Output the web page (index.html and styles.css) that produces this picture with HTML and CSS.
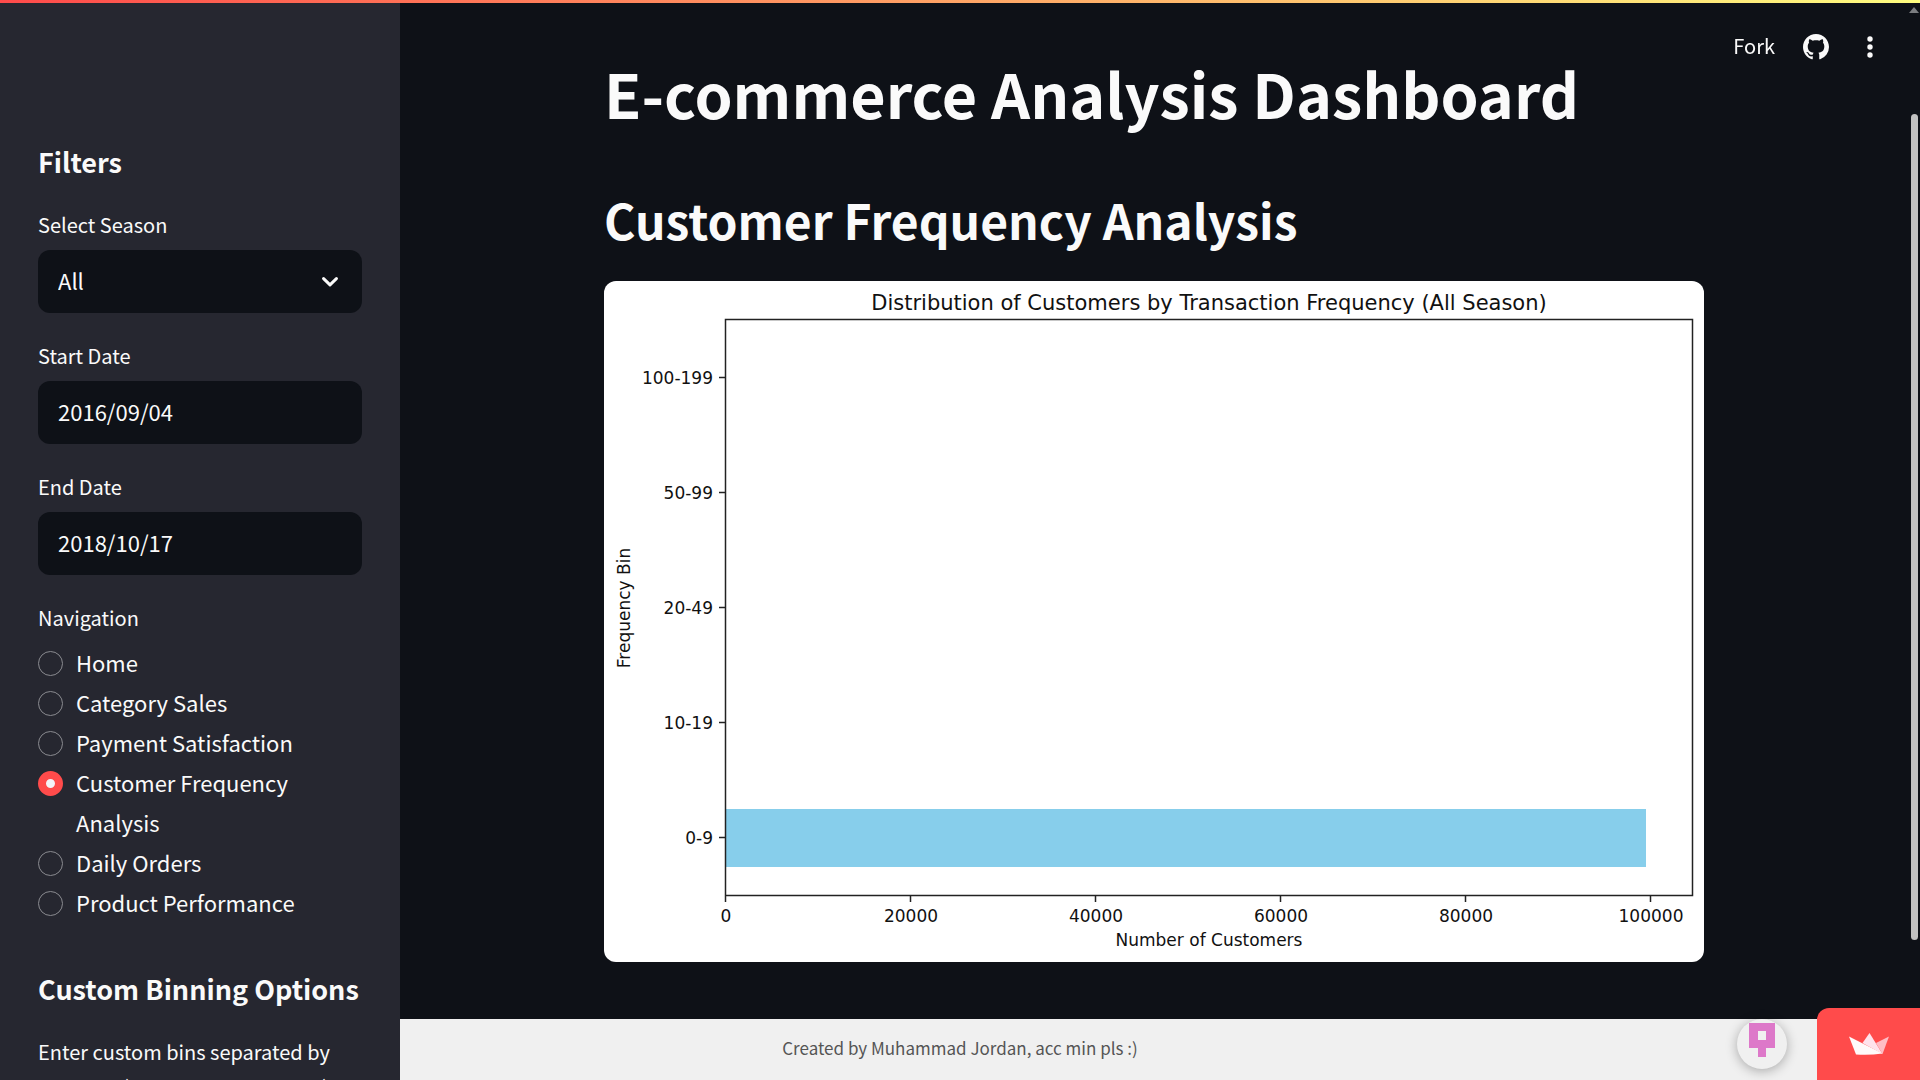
FILE: index.html
```html
<!DOCTYPE html>
<html lang="en">
<head>
<meta charset="utf-8">
<title>E-commerce Analysis Dashboard</title>
<link rel="stylesheet" href="styles.css">
</head>
<body>
<div class="app">
  <aside class="sidebar">
    <h2 class="side-title">Filters</h2>
    <div class="field">
      <label for="season">Select Season</label>
      <div class="select-wrap">
        <select id="season" class="control"><option>All</option></select>
        <svg class="chevron" viewBox="0 0 16 10" aria-hidden="true"><path d="M1.6 1.6 L8 7.8 L14.4 1.6" fill="none" stroke="currentColor" stroke-width="3" stroke-linecap="round" stroke-linejoin="round"/></svg>
      </div>
    </div>
    <div class="field">
      <label for="start">Start Date</label>
      <input id="start" class="control" type="text" value="2016/09/04">
    </div>
    <div class="field">
      <label for="end">End Date</label>
      <input id="end" class="control" type="text" value="2018/10/17">
    </div>
    <fieldset class="nav">
      <legend>Navigation</legend>
      <label class="option"><input type="radio" name="nav"><span>Home</span></label>
      <label class="option"><input type="radio" name="nav"><span>Category Sales</span></label>
      <label class="option"><input type="radio" name="nav"><span>Payment Satisfaction</span></label>
      <label class="option"><input type="radio" name="nav" checked><span>Customer Frequency Analysis</span></label>
      <label class="option"><input type="radio" name="nav"><span>Daily Orders</span></label>
      <label class="option"><input type="radio" name="nav"><span>Product Performance</span></label>
    </fieldset>
    <h2 class="side-title">Custom Binning Options</h2>
    <div class="field">
      <label for="bins">Enter custom bins separated by commas (e.g., 0,9,19,49,99,199)</label>
      <input id="bins" class="control" type="text">
    </div>
  </aside>

  <main class="main">
    <div class="content">
      <h1>E-commerce Analysis Dashboard</h1>
      <h2 class="section-title">Customer Frequency Analysis</h2>
      <svg class="chart" viewBox="0 0 1100 681" role="img" aria-label="Distribution of customers by transaction frequency">
        <rect x="122" y="528" width="920" height="58" fill="#87ceeb"/>
        <path d="M121.500 38.500H1088.500V614.500H121.500Z M115 96.500h6 M115 211.500h6 M115 326.500h6 M115 441.500h6 M115 556.500h6 M121.500 615v6 M306.500 615v6 M491.500 615v6 M676.500 615v6 M861.500 615v6 M1046.500 615v6" class="axes"/>
        <text class="chart-title" x="605" y="29">Distribution of Customers by Transaction Frequency (All Season)</text>
        <g class="y-ticks">
          <text x="109" y="103">100-199</text>
          <text x="109" y="218">50-99</text>
          <text x="109" y="333">20-49</text>
          <text x="109" y="448">10-19</text>
          <text x="109" y="563">0-9</text>
        </g>
        <g class="x-ticks">
          <text x="122" y="641">0</text>
          <text x="307" y="641">20000</text>
          <text x="492" y="641">40000</text>
          <text x="677" y="641">60000</text>
          <text x="862" y="641">80000</text>
          <text x="1047" y="641">100000</text>
          <text x="605" y="665">Number of Customers</text>
          <text x="26" y="327" transform="rotate(-90 26 327)">Frequency Bin</text>
        </g>
      </svg>
    </div>
  </main>
</div>

<footer class="footer">Created by Muhammad Jordan, acc min pls :)</footer>
<div class="decoration"></div>

<header class="toolbar">
  <button type="button" class="fork">Fork</button>
  <a href="#" class="icon" aria-label="View source"><svg width="26" height="26" viewBox="0 0 16 16" fill="currentColor"><path d="M8 0C3.580 0 0 3.580 0 8c0 3.540 2.290 6.530 5.470 7.590.4.070.55-.17.55-.38 0-.19-.01-.82-.01-1.490-2.010.37-2.530-.49-2.690-.94-.09-.23-.48-.94-.82-1.130-.28-.15-.68-.52-.01-.53.63-.01 1.080.58 1.230.82.72 1.210 1.870.87 2.330.66.07-.52.28-.87.51-1.070-1.780-.2-3.640-.89-3.640-3.950 0-.87.31-1.590.82-2.150-.08-.2-.36-1.020.08-2.120 0 0 .67-.21 2.200.82.64-.18 1.320-.27 2-.27s1.360.09 2 .27c1.530-1.040 2.200-.82 2.200-.82.44 1.100.16 1.920.08 2.120.51.56.82 1.270.82 2.150 0 3.070-1.870 3.750-3.650 3.950.29.25.54.73.54 1.480 0 1.070-.01 1.930-.01 2.200 0 .21.15.46.55.38A8.010 8.010 0 0 0 16 8c0-4.420-3.580-8-8-8z"/></svg></a>
  <button type="button" class="icon" aria-label="Menu"><svg width="26" height="26" viewBox="0 0 26 26" fill="currentColor"><circle cx="13" cy="5" r="2.700"/><circle cx="13" cy="13" r="2.700"/><circle cx="13" cy="21" r="2.700"/></svg></button>
</header>

<div class="scrollbar" aria-hidden="true"><div class="arrow"></div><div class="thumb"></div></div>

<a href="#" class="avatar" aria-label="Creator profile"><svg width="50" height="50" viewBox="0 0 50 50"><path fill="#dd78c9" fill-rule="evenodd" d="M12 4h26v25h-9v9h-8v-9h-9z M21 12h8v9h-8z"/></svg></a>
<a href="#" class="badge" aria-label="Hosted app"><svg width="40" height="22" viewBox="0 0 40 22"><path fill="#ffbdc5" d="M40 3.500 27 10 33.500 21z"/><path fill="#ffe3ec" d="M20.500 0 13.500 10 33.500 21z"/><path fill="#fffafa" d="M0 3.500 33.500 20.500Q20 22.500 7 21.500z"/></svg></a>
</body>
</html>
```
FILE: styles.css
```css
* { box-sizing: border-box; }

body {
  margin: 0;
  background: #0e1117;
  color: #fafafa;
  font-family: "Noto Sans CJK SC", "Source Sans Pro", sans-serif;
  font-size: 22px;
  line-height: 40px;
  overflow: hidden;
}

button, input, select { font: inherit; color: inherit; }

.app {
  display: grid;
  grid-template-columns: 400px 1fr;
  height: 100vh;
}

.sidebar {
  position: relative;
  z-index: 2;
  overflow: hidden;
  padding: 144px 38px 0;
  background: #262730;
}

.side-title {
  margin: 0 0 27px;
  font-size: 27px;
  line-height: 36px;
  font-weight: 700;
  white-space: nowrap;
}

.field { margin-bottom: 25px; }

.field label, .nav legend {
  display: block;
  margin-bottom: 8px;
  padding: 0;
  font-size: 20px;
  line-height: 35px;
}

.control {
  display: block;
  width: 100%;
  height: 63px;
  padding: 0 20px 3px;
  border: 0;
  border-radius: 12px;
  background: #0e1117;
  appearance: none;
}

.select-wrap { position: relative; }

.chevron {
  position: absolute;
  top: 27px;
  right: 24px;
  width: 16px;
  height: 10px;
}

.nav {
  margin: 0 0 49px;
  padding: 0;
  border: 0;
}

.nav legend { margin-bottom: 7px; }

.option {
  display: flex;
  align-items: flex-start;
  gap: 13px;
}

.option input {
  flex: none;
  width: 25px;
  height: 25px;
  margin: 9px 0 0;
  border: 1px solid #8a8b90;
  border-radius: 50%;
  appearance: none;
}

.option input:checked {
  border: 8px solid #ff4b4b;
  background: #f4f4f8;
}

.main { padding: 52px 12px 0 0; }

.content {
  max-width: 1100px;
  margin: 0 auto;
}

h1 {
  margin: 0 0 51px;
  font-size: 61px;
  line-height: 82px;
  font-weight: 700;
}

.section-title {
  margin: 0 0 28px;
  font-size: 48px;
  line-height: 68px;
  font-weight: 700;
}

.chart {
  display: block;
  width: 100%;
  border-radius: 12px;
  background: #fff;
  font-family: "DejaVu Sans", sans-serif;
  font-size: 17px;
  fill: #111;
}

.axes { fill: none; stroke: #222; stroke-width: 1.5; }
.chart-title { font-size: 21px; text-anchor: middle; }
.y-ticks { text-anchor: end; }
.x-ticks { text-anchor: middle; }

.footer {
  position: fixed;
  z-index: 1;
  bottom: 0;
  left: 0;
  width: 100%;
  padding: 11px 0 14px;
  background: #f0f0f0;
  color: #555;
  font-size: 17px;
  line-height: 36px;
  text-align: center;
}

.decoration {
  position: fixed;
  z-index: 3;
  top: 0;
  left: 0;
  right: 0;
  height: 3px;
  background: linear-gradient(90deg, #ff4b4b, #fffd80);
}

.toolbar {
  position: fixed;
  z-index: 3;
  top: 27px;
  right: 37px;
  display: flex;
  align-items: center;
  gap: 28px;
}

.toolbar button, .toolbar a {
  padding: 0;
  border: 0;
  background: none;
  color: #fafafa;
}

.toolbar .fork { padding-bottom: 2px; font-size: 20px; line-height: 38px; }
.icon { display: flex; }

.scrollbar {
  position: fixed;
  top: 3px;
  right: 0;
  width: 12px;
  height: 100vh;
  padding: 4px 1px 0;
}

.arrow {
  width: 0;
  border: 5px solid transparent;
  border-top: 0;
  border-bottom: 6px solid #7b7d80;
}

.thumb {
  width: 7px;
  height: 826px;
  margin: 101px auto 0;
  border-radius: 4px;
  background: #c1c1c1;
}

.avatar {
  position: fixed;
  z-index: 2;
  right: 133px;
  bottom: 11px;
  width: 50px;
  height: 50px;
  border-radius: 50%;
  background: #f0f0f0;
  box-shadow: 0 2px 12px rgba(0, 0, 0, .3);
}

.badge {
  position: fixed;
  z-index: 2;
  right: 0;
  bottom: 0;
  display: flex;
  align-items: center;
  justify-content: center;
  width: 103px;
  height: 72px;
  border-radius: 12px 0 0;
  background: #ff4b4b;
}
```
